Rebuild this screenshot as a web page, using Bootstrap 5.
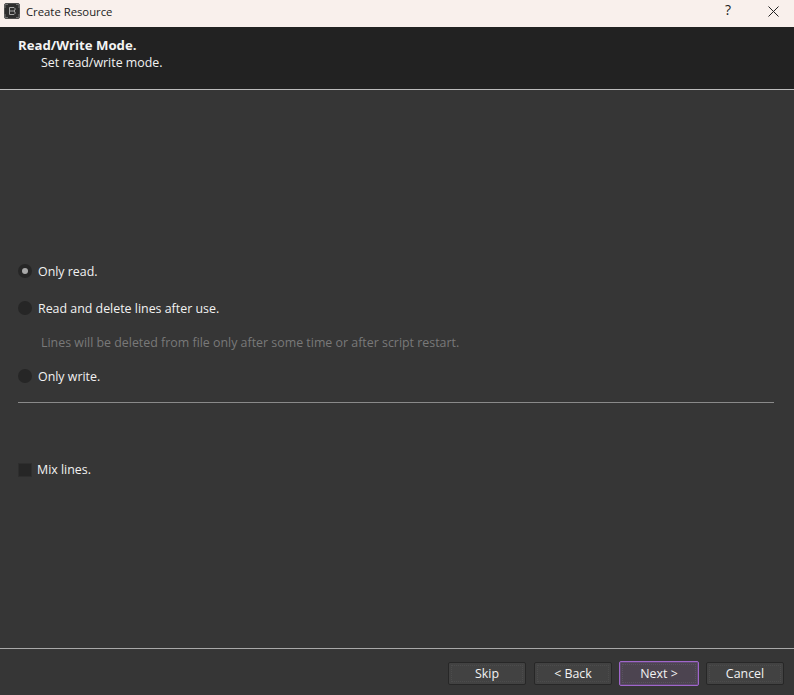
<!DOCTYPE html>
<html lang="en">
<head>
<meta charset="utf-8">
<title>Create Resource</title>
<link href="https://cdn.jsdelivr.net/npm/bootstrap@5.3.0/dist/css/bootstrap.min.css" rel="stylesheet">
<style>
html, body { height: 100%; }
body { background: #363636; color: #f2f2f2; font: 12.4px/16px "Open Sans", sans-serif; overflow: hidden; }
.win { height: 695px; }
.titlebar { height: 27px; background: #f9f0ec; color: #222; padding: 0 0 3px 4px; font-size: 11.3px; }
.titlebar svg.appicon { margin-top: -2px; }
.titlebar .appname { margin-left: 6px; }
.tb-help { position: absolute; left: 725px; top: 2px; font-size: 14px; font-weight: 500; color: #222; }
.tb-close { position: absolute; left: 768px; top: 6px; }
.banner { height: 63px; background: #222222; border-bottom: 1px solid #bdbdbd; padding: 10px 18px 0; }
.banner-title { font-weight: 700; color: #f4f4f4; font-size: 13.2px; line-height: 17px; margin-bottom: 1px; }
.banner-sub { padding-left: 23px; }
.content { padding: 0 20px 0 18px; }
.opt { height: 16px; gap: 6px; color: #f2f2f2; margin: 0; }
.dot { width: 14px; height: 14px; border-radius: 50%; background: #262626; flex: none; margin-bottom: 2px; }
.dot.on::after { content: ""; width: 6px; height: 6px; border-radius: 50%; background: #a9a9a9; }
.box { width: 14px; height: 14px; background: #262626; border: 1px solid #2e2e2e; flex: none; }
.mix { gap: 5px; }
.hint { color: #797979; padding-left: 23px; }
.rule { height: 1px; background: #8a8a8a; }
.foot { border-top: 1px solid #a9a9a9; height: 47px; padding: 13px 10px 0 0; }
.dlgbtn { width: 78px; height: 23px; padding: 0; font: 12.4px/21px "Open Sans", sans-serif; color: #f2f2f2; background: #424242; border: 1px solid #272727; border-radius: 2px; outline: 1px dotted #4c4c4c; outline-offset: -4px; }
.dlgbtn.main { width: 80px; height: 25px; margin: -1px 7px 0; background: #4c4450; border-color: #a066cc; box-shadow: inset 0 0 0 1px #5f4a6e; outline-color: #5a5260; }
.s1 { margin-top: 174px; }
.s2 { margin-top: 21px; }
.s3 { margin-top: 18px; }
.s4 { margin-top: 18px; }
.s5 { margin-top: 17px; }
.s6 { margin-top: 59px; }
.back { margin-left: 8px; }
</style>
</head>
<body>
<div class="win d-flex flex-column position-relative">
  <div class="titlebar d-flex align-items-center">
    <svg class="appicon" width="16" height="16" viewBox="0 0 16 16" aria-hidden="true">
      <rect x="0.5" y="0.5" width="15" height="15" rx="1.5" fill="#2e2e2e" stroke="#4d4d4d"/>
      <path d="M1 5V1.5H4M12 1.5H15V5M1 11V14.5H4M12 14.5H15V11" fill="none" stroke="#707070"/>
      <path d="M5.5 4.5H10L11 5.5V7L10 8L11 9V10.5L10 11.5H5.5ZM5.5 8H10" fill="none" stroke="#a8a8a8"/>
    </svg>
    <span class="appname">Create Resource</span>
    <span class="tb-help">?</span>
    <svg class="tb-close" width="11" height="11" viewBox="0 0 11 11" aria-hidden="true"><path d="M.5 .5L10.5 10.5M10.5 .5L.5 10.5" stroke="#222" fill="none"/></svg>
  </div>
  <div class="banner">
    <div class="banner-title">Read/Write Mode.</div>
    <div class="banner-sub">Set read/write mode.</div>
  </div>
  <div class="content flex-grow-1">
    <label class="opt d-flex align-items-center s1"><span class="dot on d-flex align-items-center justify-content-center"></span>Only read.</label>
    <label class="opt d-flex align-items-center s2"><span class="dot"></span>Read and delete lines after use.</label>
    <div class="hint s3">Lines will be deleted from file only after some time or after script restart.</div>
    <label class="opt d-flex align-items-center s4"><span class="dot"></span>Only write.</label>
    <div class="rule s5"></div>
    <label class="opt mix d-flex align-items-center s6"><span class="box"></span>Mix lines.</label>
  </div>
  <div class="foot d-flex justify-content-end">
    <button class="dlgbtn" type="button">Skip</button>
    <button class="dlgbtn back" type="button">&lt; Back</button>
    <button class="dlgbtn main" type="button">Next &gt;</button>
    <button class="dlgbtn" type="button">Cancel</button>
  </div>
</div>
</body>
</html>
